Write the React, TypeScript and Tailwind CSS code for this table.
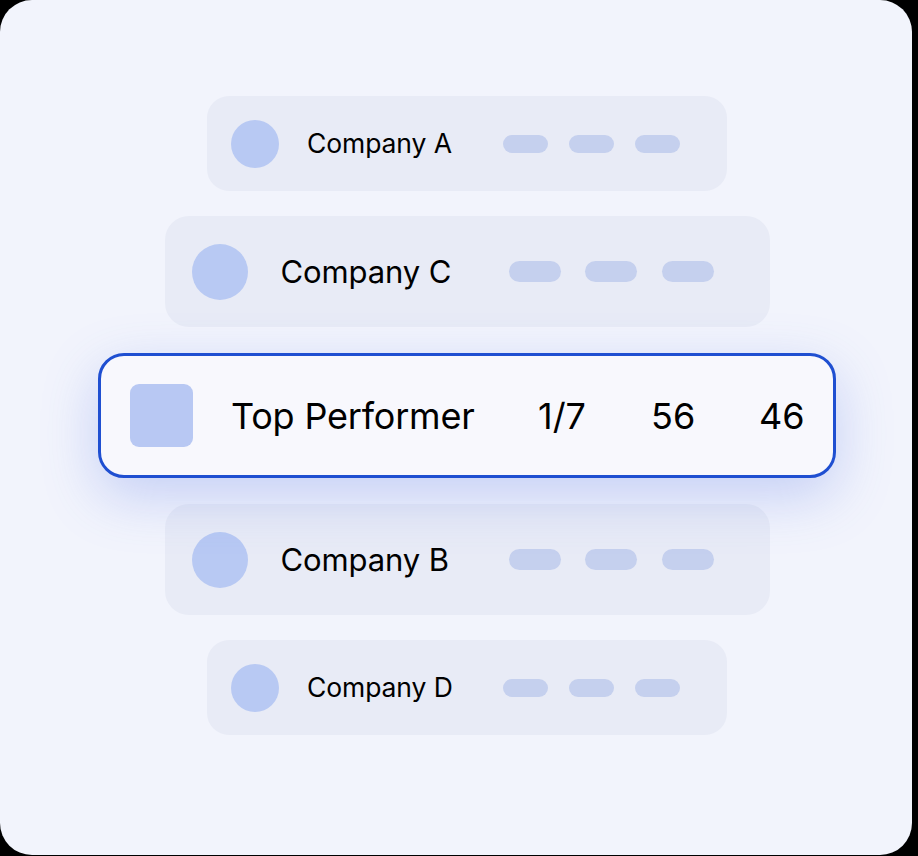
const font = { fontFamily: "Inter, 'Noto Sans', sans-serif" };

function Pills({ size }: { size: "sm" | "md" }) {
  const cls =
    size === "sm"
      ? "h-[18px] w-[45px] rounded-full bg-[#c5d0ee]"
      : "h-[21px] w-[52px] rounded-full bg-[#c5d0ee]";
  return (
    <div className={size === "sm" ? "flex gap-[21px]" : "flex gap-[24.5px]"}>
      <div className={cls} />
      <div className={cls} />
      <div className={cls} />
    </div>
  );
}

function SmallRow({ name, className = "" }: { name: string; className?: string }) {
  return (
    <div className={`flex h-[95px] w-[520px] items-center rounded-[22px] bg-[#e8ebf6] pl-[24px] ${className}`}>
      <div className="h-[48px] w-[48px] rounded-full bg-[#b8c9f3]" />
      <div className="ml-[28px] w-[196px] text-[26.5px] leading-none tracking-[-0.1px] text-black">{name}</div>
      <Pills size="sm" />
    </div>
  );
}

function MidRow({ name, className = "" }: { name: string; className?: string }) {
  return (
    <div className={`flex h-[111px] w-[605px] items-center rounded-[24px] bg-[#e8ebf6] pl-[27px] ${className}`}>
      <div className="h-[56px] w-[56px] rounded-full bg-[#b8c9f3]" />
      <div className="ml-[33px] w-[228px] text-[31px] leading-none tracking-[-0.1px] text-black">{name}</div>
      <Pills size="md" />
    </div>
  );
}

function TopRow() {
  return (
    <div className="relative z-10 mt-[26px] flex h-[125px] w-[738px] items-center rounded-[26px] border-[3px] border-[#1f4fd1] bg-[#f8f8fd] pl-[29px] shadow-[0_18px_55px_rgba(80,110,230,0.28)]">
      <div className="h-[63px] w-[63px] rounded-[9px] bg-[#b8c8f3]" />
      <div className="ml-[38px] w-[307px] text-[36px] leading-none tracking-[-0.2px] text-black">Top Performer</div>
      <div className="w-[113px] text-[36px] leading-none text-black">1/7</div>
      <div className="w-[108px] text-[36px] leading-none text-black">56</div>
      <div className="text-[36px] leading-none text-black">46</div>
    </div>
  );
}

export default function App() {
  return (
    <div className="h-[856px] w-[918px] bg-black" style={font}>
      <div className="flex h-[855px] w-[912px] flex-col items-center rounded-[32px] bg-[#f2f4fc] pl-[22px] pt-[96px]">
        <SmallRow name="Company A" />
        <MidRow name="Company C" className="mt-[25px]" />
        <TopRow />
        <MidRow name="Company B" className="mt-[26px]" />
        <SmallRow name="Company D" className="mt-[25px]" />
      </div>
    </div>
  );
}
